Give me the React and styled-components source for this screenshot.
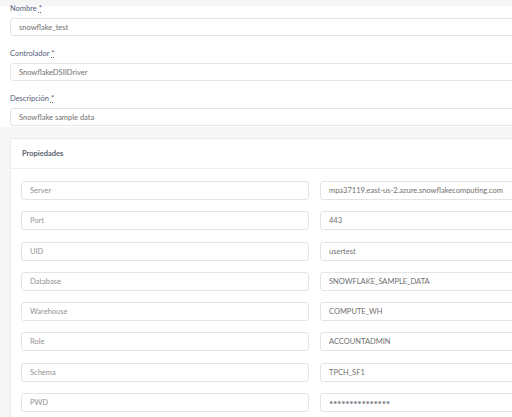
import React from "react";
import styled, { createGlobalStyle } from "styled-components";

const Global = createGlobalStyle`
  html, body { margin: 0; padding: 0; background: #ffffff; overflow: hidden; }
  body { font-family: Lato, "Open Sans", "Noto Sans", sans-serif; }
`;

const Viewport = styled.div`
  width: 100%;
  height: 100vh;
  overflow: hidden;
`;

const Page = styled.div`
  width: 640px;
  display: flex;
  flex-direction: column;
  background: #ffffff;
`;

const TopEdge = styled.div`
  height: 7px;
  background: linear-gradient(#f4f4f4, #f9f9f9);
`;

const Fields = styled.div`
  display: flex;
  flex-direction: column;
  gap: 13px;
  padding: 0 0 1px 10px;
  margin-top: -3px;
`;

const Field = styled.div`
  display: flex;
  flex-direction: column;
  gap: 4px;
`;

const Label = styled.label`
  font-size: 7.5px;
  line-height: 10px;
  color: #51607a;
  abbr {
    text-decoration: underline dotted;
    text-underline-offset: 1px;
    color: #51607a;
  }
`;

const Input = styled.input`
  box-sizing: border-box;
  height: ${(p) => p.$h || 18}px;
  width: 100%;
  border: 1px solid #e4e4e4;
  border-radius: 3px;
  background: #ffffff;
  padding: 0 8px;
  font-family: Lato, "Open Sans", sans-serif;
  font-size: 7.5px;
  color: ${(p) => (p.$muted ? "#929292" : "#707070")};
  outline: none;
  margin: 0;
  &[type="password"] {
    color: #8a8f98;
    letter-spacing: -0.3px;
  }
`;

const Section = styled.div`
  background: #f7f7f7;
  padding: 11px 0 0 10px;
  flex: 1;
`;

const Card = styled.div`
  background: #ffffff;
  border: 1px solid #ececec;
  border-right: none;
  border-radius: 3px 0 0 3px;
  box-shadow: 0 0 2px rgba(0, 0, 0, 0.03);
`;

const CardHeader = styled.div`
  height: 29px;
  display: flex;
  align-items: center;
  padding-left: 11px;
  border-bottom: 1px solid #edf0f6;
  font-size: 7.5px;
  font-weight: 700;
  color: #5a626c;
`;

const CardBody = styled.div`
  padding: 12px 11px 20px 10px;
  display: grid;
  grid-template-columns: 288px 288px;
  column-gap: 11px;
  row-gap: 11.3px;
`;

const props = [
  ["Server", "mpa37119.east-us-2.azure.snowflakecomputing.com"],
  ["Port", "443"],
  ["UID", "usertest"],
  ["Database", "SNOWFLAKE_SAMPLE_DATA"],
  ["Warehouse", "COMPUTE_WH"],
  ["Role", "ACCOUNTADMIN"],
  ["Schema", "TPCH_SF1"],
  ["PWD", "snowflakepasswd", true],
];

export default function App() {
  return (
    <>
      <Global />
      <Viewport>
        <Page>
          <TopEdge />
          <Fields>
            <Field>
              <Label>
                Nombre <abbr title="required">*</abbr>
              </Label>
              <Input readOnly defaultValue="snowflake_test" />
            </Field>
            <Field>
              <Label>
                Controlador <abbr title="required">*</abbr>
              </Label>
              <Input readOnly defaultValue="SnowflakeDSIIDriver" />
            </Field>
            <Field>
              <Label>
                Descripción <abbr title="required">*</abbr>
              </Label>
              <Input readOnly defaultValue="Snowflake sample data" />
            </Field>
          </Fields>
          <Section>
            <Card>
              <CardHeader>Propiedades</CardHeader>
              <CardBody>
                {props.map(([k, v, pw]) => (
                  <React.Fragment key={k}>
                    <Input $h={19} $muted readOnly defaultValue={k} />
                    <Input
                      $h={19}
                      readOnly
                      type={pw ? "password" : "text"}
                      defaultValue={v}
                    />
                  </React.Fragment>
                ))}
              </CardBody>
            </Card>
          </Section>
        </Page>
      </Viewport>
    </>
  );
}
